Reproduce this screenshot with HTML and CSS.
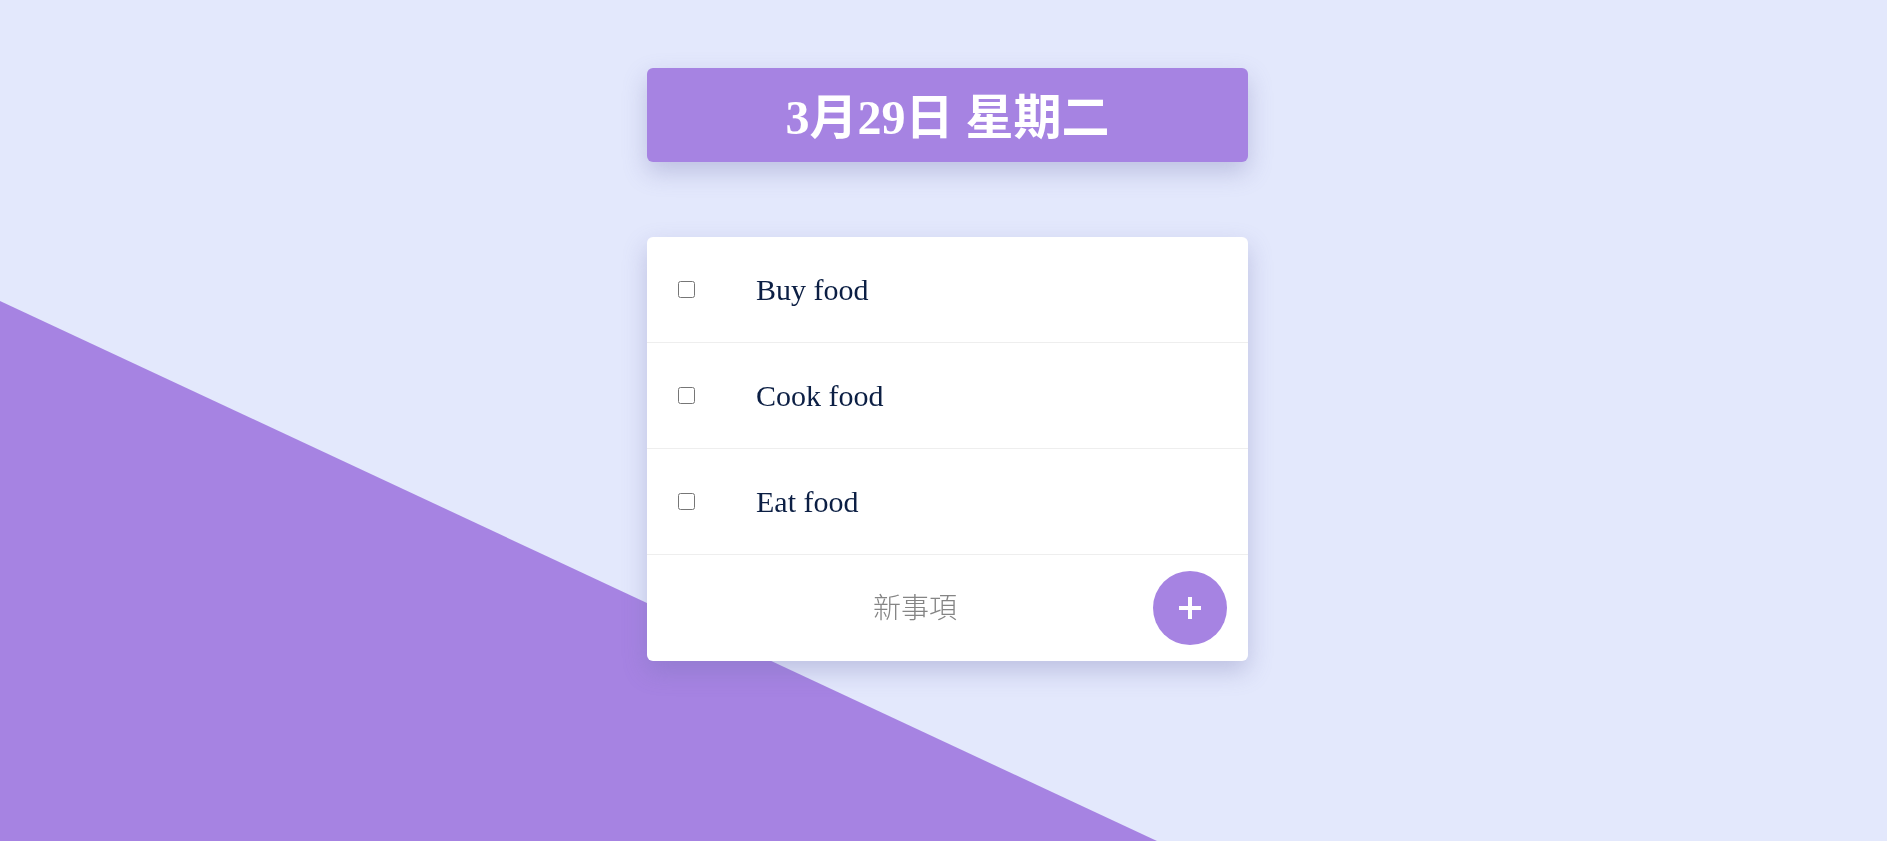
FILE: index.html
```html
<!DOCTYPE html>
<html lang="zh-Hant">
<head>
<meta charset="utf-8">
<title>Todo</title>
<link rel="stylesheet" href="styles.css">
</head>
<body>
<div class="backdrop"></div>
<main class="app">
  <header class="date-banner">
    <h1 class="date-title">3月29日 星期二</h1>
  </header>
  <section class="todo-card">
    <ul class="todo-list">
      <li class="todo-item"><input class="todo-check" type="checkbox"><span class="todo-text">Buy food</span></li>
      <li class="todo-item"><input class="todo-check" type="checkbox"><span class="todo-text">Cook food</span></li>
      <li class="todo-item"><input class="todo-check" type="checkbox"><span class="todo-text">Eat food</span></li>
    </ul>
    <form class="todo-form">
      <input class="todo-input" type="text" placeholder="新事項">
      <button class="add-btn" type="button" aria-label="add">
        <svg width="24" height="24" viewBox="0 0 24 24"><path d="M12 1v22M1 12h22" stroke="#fff" stroke-width="4" fill="none"/></svg>
      </button>
    </form>
  </section>
</main>
</body>
</html>
```
FILE: styles.css
```css
html, body {
  margin: 0;
  padding: 0;
  height: 100%;
}
body {
  background: #e3e8fc;
  font-family: "Liberation Serif", "Noto Sans CJK TC", serif;
  overflow: hidden;
}
.backdrop {
  position: fixed;
  inset: 0;
  background: #a683e2;
  clip-path: polygon(0 301px, 1157px 100%, 0 100%);
  z-index: 0;
}
.app {
  position: relative;
  z-index: 1;
  display: flex;
  flex-direction: column;
  align-items: center;
  padding: 68px 0 0 8px;
  gap: 75px;
}
.date-banner {
  width: 601px;
  height: 94px;
  background: #a683e2;
  border-radius: 6px;
  box-shadow: 0 10px 24px rgba(110, 110, 170, 0.32);
  display: flex;
  align-items: center;
  justify-content: center;
}
.date-title {
  margin: 0;
  color: #fff;
  font-size: 48px;
  font-weight: bold;
  line-height: 1;
  padding-top: 6px;
  font-family: "Liberation Serif", "Noto Sans CJK TC", serif;
}
.todo-card {
  width: 601px;
  background: #fff;
  border-radius: 6px;
  box-shadow: 0 10px 24px rgba(110, 110, 170, 0.32);
}
.todo-list {
  list-style: none;
  margin: 0;
  padding: 0;
}
.todo-item {
  height: 105px;
  border-bottom: 1px solid #eeeeee;
  display: flex;
  align-items: center;
  padding: 0 31px;
  gap: 61px;
}
.todo-check {
  width: 17px;
  height: 17px;
  margin: 0;
  flex: none;
}
.todo-text {
  font-size: 30px;
  color: #0c1f44;
  font-family: "Liberation Serif", serif;
}
.todo-form {
  display: flex;
  align-items: center;
  padding: 16px 21px 16px 0;
  margin: 0;
}
.todo-input {
  flex: 1;
  min-width: 0;
  border: none;
  outline: none;
  background: transparent;
  text-align: center;
  font-size: 28px;
  font-weight: 300;
  padding: 0 0 4px 30px;
  font-family: "Noto Sans CJK TC", sans-serif;
  color: #333;
}
.todo-input::placeholder {
  color: #858585;
}
.add-btn {
  width: 74px;
  height: 74px;
  border-radius: 50%;
  border: none;
  background: #a683e2;
  display: flex;
  align-items: center;
  justify-content: center;
  padding: 0;
  flex: none;
}
```
